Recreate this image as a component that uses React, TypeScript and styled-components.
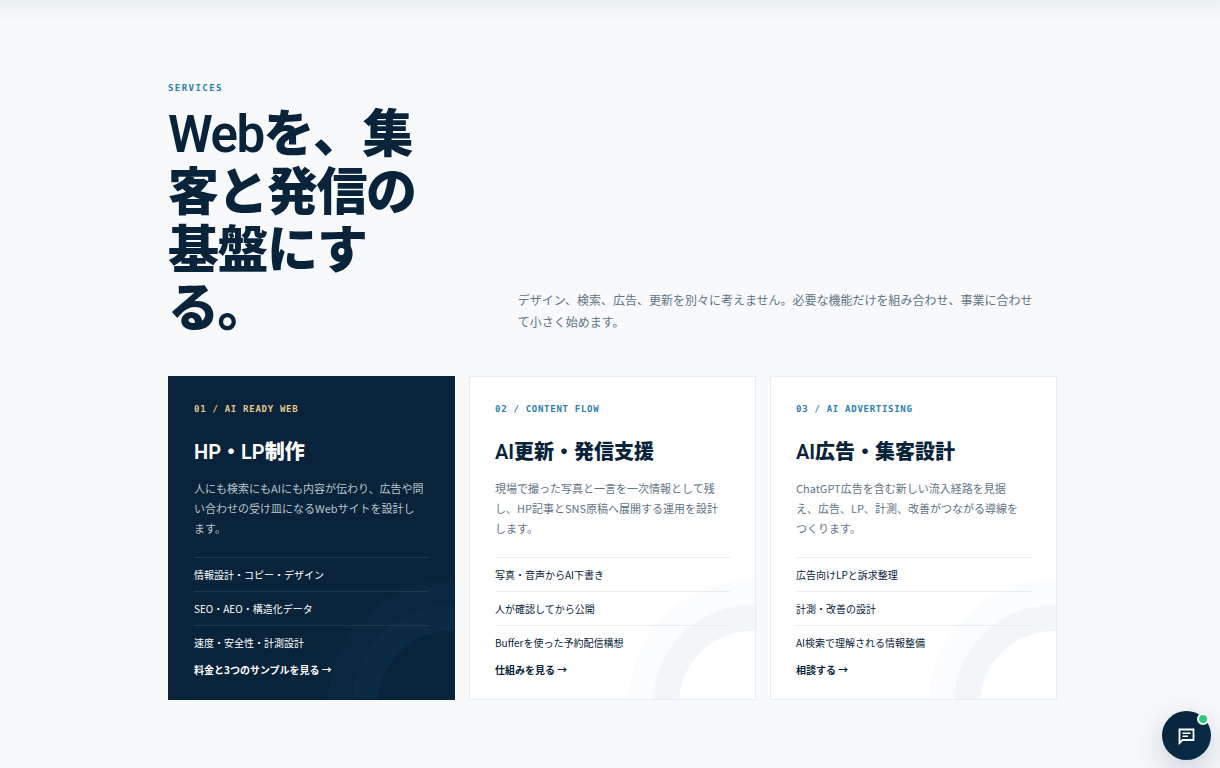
import React from "react";
import styled, { createGlobalStyle } from "styled-components";

const jp = `"Noto Sans CJK JP", "Noto Sans", sans-serif`;
const display = `Roboto, "Noto Sans CJK JP", sans-serif`;
const mono = `"DejaVu Sans Mono", "Liberation Mono", monospace`;

const GlobalStyle = createGlobalStyle`
  *, *::before, *::after { box-sizing: border-box; }
  body {
    margin: 0;
    background: #f7f9fb;
    color: #08233a;
    font-family: ${jp};
  }
`;

const Page = styled.main`
  min-height: 100vh;
  background: linear-gradient(#eaf0f1, #f2f5f6 10px, #f7f9fb 24px);
`;

const Section = styled.section`
  padding: 81px 163px 68px 168px;
`;

const SectionHead = styled.header`
  display: grid;
  grid-template-columns: 1fr 2fr;
  gap: 80px;
  align-items: end;
  margin-bottom: 38px;
`;

const Eyebrow = styled.p<{ $gold?: boolean; $wide?: boolean }>`
  margin: 0;
  font: 700 9px/14px ${mono};
  letter-spacing: ${(p) => (p.$wide ? "0.16em" : "0.08em")};
  color: ${(p) => (p.$gold ? "#e3c88a" : "#2b7fae")};
`;

const Heading = styled.h2`
  margin: 11px 0 0;
  font: 900 51px/58px ${display};
  letter-spacing: -0.03em;
`;

const Latin = styled.span`
  font-weight: 600;
`;

const Lead = styled.p`
  margin: 0;
  padding-bottom: 5px;
  font-size: 12px;
  line-height: 22px;
  color: #627586;
  white-space: pre-line;
`;

const Cards = styled.div`
  display: grid;
  grid-template-columns: repeat(3, 1fr);
  gap: 14px;
`;

const Card = styled.article<{ $dark?: boolean }>`
  position: relative;
  overflow: hidden;
  padding: 25px 25px 20px;
  border: 1px solid ${(p) => (p.$dark ? "#08233a" : "#e7ecf0")};
  background: ${(p) => (p.$dark ? "#08233a" : "#fff")};
  color: ${(p) => (p.$dark ? "#fff" : "#08233a")};

  &::after {
    content: "";
    position: absolute;
    right: -70px;
    bottom: -78px;
    width: 146px;
    height: 146px;
    border-radius: 50%;
    box-shadow: 0 0 0 26px ${(p) => (p.$dark ? "#0a2b43" : "#f2f6f9")},
      0 0 0 51px ${(p) => (p.$dark ? "#09273e" : "#fafcfd")};
  }

  > * {
    position: relative;
    z-index: 1;
  }
`;

const CardTitle = styled.h3`
  margin: 20px 0 0;
  font: 900 20px/32px ${display};
`;

const CardText = styled.p<{ $dark?: boolean }>`
  margin: 10px 0 19px;
  font-size: 11px;
  line-height: 20px;
  white-space: pre-line;
  color: ${(p) => (p.$dark ? "#b9c3cc" : "#627586")};
`;

const Features = styled.ul<{ $dark?: boolean }>`
  list-style: none;
  margin: 0;
  padding: 0;
  font-size: 10px;
  line-height: 17px;

  li {
    padding: 8px 0;
    border-top: 1px solid ${(p) => (p.$dark ? "#1f394b" : "#e9edf1")};
  }
`;

const CardLink = styled.a`
  display: block;
  width: fit-content;
  margin-top: 2px;
  color: inherit;
  font-size: 10px;
  font-weight: 700;
  line-height: 18px;
  text-decoration: none;
`;

const ChatButton = styled.button`
  position: fixed;
  right: 9px;
  bottom: 8px;
  display: grid;
  place-items: center;
  width: 49px;
  height: 49px;
  padding: 0;
  border: 0;
  border-radius: 50%;
  background: linear-gradient(145deg, #08233a, #082c48);
  box-shadow: 0 10px 32px rgba(8, 35, 58, 0.2);
  cursor: pointer;
`;

const OnlineDot = styled.span`
  position: absolute;
  top: 2px;
  right: 2px;
  width: 12px;
  height: 12px;
  border: 2px solid #fff;
  border-radius: 50%;
  background: #2fc77e;
`;

const services = [
  {
    tag: "01 / AI READY WEB",
    title: (
      <>
        <Latin>HP</Latin>・<Latin>LP</Latin>制作
      </>
    ),
    text: "人にも検索にもAIにも内容が伝わり、広告や問\nい合わせの受け皿になるWebサイトを設計し\nます。",
    features: ["情報設計・コピー・デザイン", "SEO・AEO・構造化データ", "速度・安全性・計測設計"],
    link: "料金と3つのサンプルを見る →",
    dark: true,
  },
  {
    tag: "02 / CONTENT FLOW",
    title: (
      <>
        <Latin>AI</Latin>更新・発信支援
      </>
    ),
    text: "現場で撮った写真と一言を一次情報として残\nし、HP記事とSNS原稿へ展開する運用を設計\nします。",
    features: ["写真・音声からAI下書き", "人が確認してから公開", "Bufferを使った予約配信構想"],
    link: "仕組みを見る →",
    dark: false,
  },
  {
    tag: "03 / AI ADVERTISING",
    title: (
      <>
        <Latin>AI</Latin>広告・集客設計
      </>
    ),
    text: "ChatGPT広告を含む新しい流入経路を見据\nえ、広告、LP、計測、改善がつながる導線を\nつくります。",
    features: ["広告向けLPと訴求整理", "計測・改善の設計", "AI検索で理解される情報整備"],
    link: "相談する →",
    dark: false,
  },
];

export default function App() {
  return (
    <Page lang="ja">
      <GlobalStyle />
      <Section>
        <SectionHead>
          <div>
            <Eyebrow $wide>SERVICES</Eyebrow>
            <Heading>
              <Latin>Web</Latin>を、集
              <br />
              客と発信の
              <br />
              基盤にす
              <br />
              る。
            </Heading>
          </div>
          <Lead>
            {
              "デザイン、検索、広告、更新を別々に考えません。必要な機能だけを組み合わせ、事業に合わせ\nて小さく始めます。"
            }
          </Lead>
        </SectionHead>
        <Cards>
          {services.map((s) => (
            <Card key={s.tag} $dark={s.dark}>
              <Eyebrow $gold={s.dark}>{s.tag}</Eyebrow>
              <CardTitle>{s.title}</CardTitle>
              <CardText $dark={s.dark}>{s.text}</CardText>
              <Features $dark={s.dark}>
                {s.features.map((f) => (
                  <li key={f}>{f}</li>
                ))}
              </Features>
              <CardLink href="#">{s.link}</CardLink>
            </Card>
          ))}
        </Cards>
      </Section>
      <ChatButton type="button" aria-label="チャットを開く">
        <svg width="19" height="19" viewBox="0 0 19 19" fill="none" stroke="#fff" strokeWidth="1.8">
          <path d="M2.500 3.500h14v10.500H5.500L2.500 17z" />
          <path d="M5.500 7.300h8M5.500 10.300h5.500" strokeWidth="1.6" />
        </svg>
        <OnlineDot />
      </ChatButton>
    </Page>
  );
}
